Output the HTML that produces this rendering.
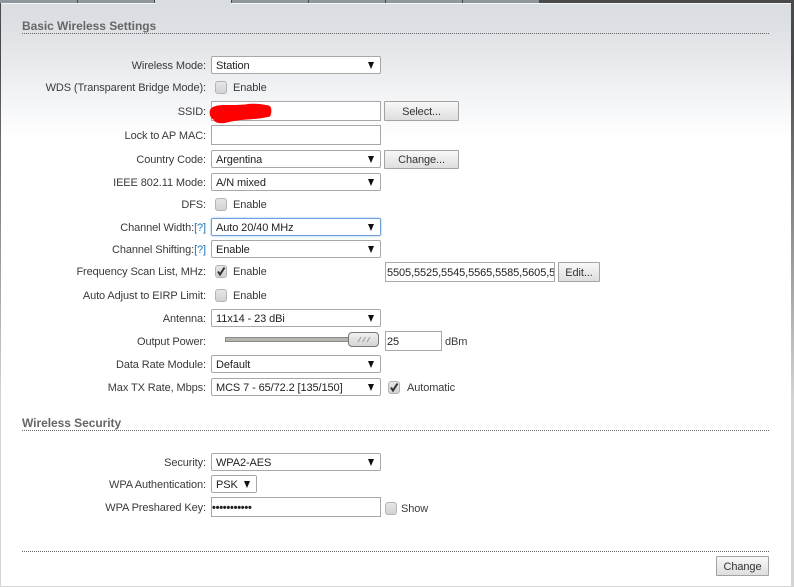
<!DOCTYPE html>
<html><head><meta charset="utf-8">
<style>
html,body{margin:0;padding:0;width:794px;height:587px;overflow:hidden;background:linear-gradient(#4a4a4a 0,#4a4a4a 60px,#d4d4d4 400px);}
body{position:relative;font:11px/14px "Liberation Sans",Arial,sans-serif;color:#3a3a3a;letter-spacing:-.1px;}
div,span{position:absolute;box-sizing:border-box;white-space:nowrap;}
.l{right:588px;text-align:right;height:14px;margin-top:1px;}
.l b{font-weight:normal;color:#1a75b8;}
.t{height:14px;margin-top:1px;}
.s{left:211px;width:170px;height:18px;background:#fff;border:1px solid #a8a8a8;border-radius:2px;padding-left:4px;line-height:18px;color:#222;}
.s:after{content:"";position:absolute;right:6px;top:5px;border-left:3.5px solid transparent;border-right:3.5px solid transparent;border-top:7px solid #111;}
.i{background:#fff;border:1px solid #a8a8a8;height:20px;line-height:20px;padding-left:1px;color:#222;overflow:hidden;}
.b{background:linear-gradient(#f8f8f8,#dedede);border:1px solid #a3a3a3;border-radius:1px;text-align:center;color:#333;height:20px;line-height:20px;}
.c{width:12px;height:13px;background:linear-gradient(#e6e6e6,#d2d2d2);border:1px solid #b4b4b4;border-radius:3px;}
.h{left:22px;font-weight:bold;font-size:12px;color:#666;height:15px;line-height:15px;letter-spacing:-.05px;margin-top:1px;}
.d{left:22px;width:747px;height:1px;border-top:1px dotted #666;}
</style></head>
<body>
<div style="left:0;top:0;width:794px;height:3px;background:#4a4a4a"></div>
<div style="left:0;top:0;width:77px;height:3px;background:#8f979e"></div>
<div style="left:78px;top:0;width:76px;height:3px;background:#8f979e"></div>
<div style="left:232px;top:0;width:76px;height:3px;background:#8f979e"></div>
<div style="left:309px;top:0;width:76px;height:3px;background:#8f979e"></div>
<div style="left:386px;top:0;width:76px;height:3px;background:#8f979e"></div>
<div style="left:463px;top:0;width:76px;height:3px;background:#8f979e"></div>
<div style="left:1px;top:3px;width:790px;height:583px;background:linear-gradient(#dadde1 0,#dbdee2 15px,#f6f7f9 105px,#fff 135px);border-top:1px solid #f6f6f6"></div>
<div style="left:155px;top:0;width:76px;height:5px;background:#dadde1"></div>

<div class="h" style="top:18px">Basic Wireless Settings</div>
<div class="d" style="top:33px"></div>

<div class="l" style="top:58px">Wireless Mode:</div>
<div class="s" style="top:56px">Station</div>

<div class="l" style="top:80px">WDS (Transparent Bridge Mode):</div>
<div class="c" style="left:215px;top:81px"></div>
<div class="t" style="left:233px;top:80px">Enable</div>

<div class="l" style="top:104px">SSID:</div>
<div class="i" style="left:211px;top:101px;width:170px"></div>
<svg style="position:absolute;left:209px;top:103px" width="64" height="21" viewBox="0 0 64 21"><path d="M1 7C3 3 9 2 16 2C24 2 30 2 36 1.500C44 0 52 1 60 2.500C63 4 63 10 61 13.500C53 15.500 46 16 38 16.500C30 17 24 18 16 20C10 20.500 6 20 4.500 16.500C1 15 0 10 1 7Z" fill="#f00"/></svg>
<div class="b" style="left:384px;top:101px;width:75px">Select...</div>

<div class="l" style="top:128px">Lock to AP MAC:</div>
<div class="i" style="left:211px;top:125px;width:170px"></div>

<div class="l" style="top:152px">Country Code:</div>
<div class="s" style="top:150px">Argentina</div>
<div class="b" style="left:384px;top:150px;width:75px;height:19px;line-height:19px">Change...</div>

<div class="l" style="top:175px">IEEE 802.11 Mode:</div>
<div class="s" style="top:173px">A/N mixed</div>

<div class="l" style="top:197px">DFS:</div>
<div class="c" style="left:215px;top:198px"></div>
<div class="t" style="left:233px;top:197px">Enable</div>

<div class="l" style="top:220px">Channel Width:<b>[?]</b></div>
<div class="s" style="top:218px;border-color:#6f9fd8;box-shadow:0 0 2px #8fb8e8">Auto 20/40 MHz</div>

<div class="l" style="top:242px">Channel Shifting:<b>[?]</b></div>
<div class="s" style="top:240px">Enable</div>

<div class="l" style="top:264px">Frequency Scan List, MHz:</div>
<div class="c" style="left:215px;top:265px"></div>
<svg style="position:absolute;left:215px;top:265px" width="12" height="13" viewBox="0 0 12 13"><path d="M3 6.500L5 9.500L9.500 2.500" fill="none" stroke="#333" stroke-width="2"/></svg>
<div class="t" style="left:233px;top:264px">Enable</div>
<div class="i" style="left:385px;top:262px;width:170px">5505,5525,5545,5565,5585,5605,5625</div>
<div class="b" style="left:558px;top:262px;width:42px">Edit...</div>

<div class="l" style="top:288px">Auto Adjust to EIRP Limit:</div>
<div class="c" style="left:215px;top:289px"></div>
<div class="t" style="left:233px;top:288px">Enable</div>

<div class="l" style="top:311px">Antenna:</div>
<div class="s" style="top:309px">11x14 - 23 dBi</div>

<div class="l" style="top:334px">Output Power:</div>
<div style="left:225px;top:337px;width:125px;height:5px;background:#b4b6b0;border:1px solid #8a8a8a"></div>
<div style="left:348px;top:332px;width:31px;height:15px;background:linear-gradient(#f0f0f0,#d4d4d4);border:1px solid #777;border-radius:4px"></div>
<svg style="position:absolute;left:357px;top:335px" width="14" height="9" viewBox="0 0 14 9"><path d="M1 7L4 2M5.500 7L8.500 2M10 7L13 2" stroke="#999" fill="none"/></svg>
<div class="i" style="left:385px;top:331px;width:57px">25</div>
<div class="t" style="left:445px;top:334px">dBm</div>

<div class="l" style="top:357px">Data Rate Module:</div>
<div class="s" style="top:355px">Default</div>

<div class="l" style="top:380px">Max TX Rate, Mbps:</div>
<div class="s" style="top:378px">MCS 7 - 65/72.2 [135/150]</div>
<div class="c" style="left:388px;top:381px"></div>
<svg style="position:absolute;left:388px;top:381px" width="12" height="13" viewBox="0 0 12 13"><path d="M3 6.500L5 9.500L9.500 2.500" fill="none" stroke="#333" stroke-width="2"/></svg>
<div class="t" style="left:407px;top:380px">Automatic</div>

<div class="h" style="top:415px">Wireless Security</div>
<div class="d" style="top:430px"></div>

<div class="l" style="top:455px">Security:</div>
<div class="s" style="top:453px">WPA2-AES</div>

<div class="l" style="top:477px">WPA Authentication:</div>
<div class="s" style="top:475px;width:46px">PSK</div>

<div class="l" style="top:500px">WPA Preshared Key:</div>
<div class="i" style="left:211px;top:497px;width:170px;font-size:11px;font-weight:bold;letter-spacing:-.25px;padding-left:0;color:#222">•••••••••••</div>
<div class="c" style="left:385px;top:502px"></div>
<div class="t" style="left:401px;top:501px">Show</div>

<div class="d" style="top:551px"></div>
<div class="b" style="left:716px;top:556px;width:53px">Change</div>
</body></html>
